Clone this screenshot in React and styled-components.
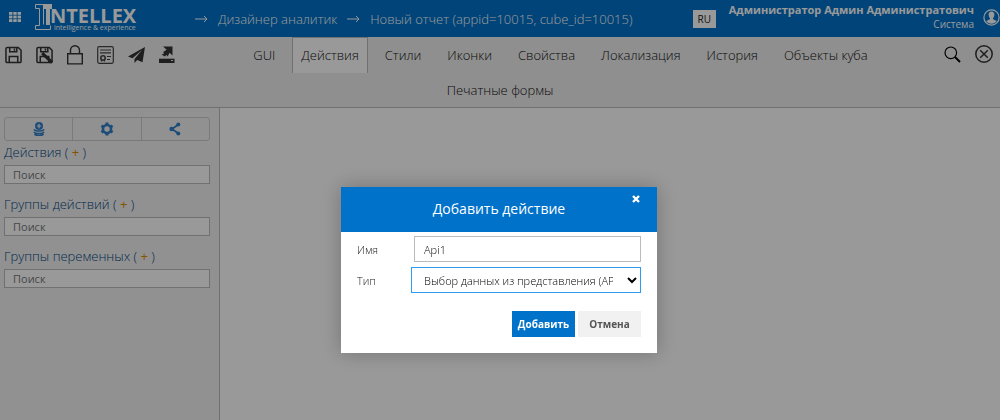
import React from 'react';
import styled, { createGlobalStyle } from 'styled-components';

const GlobalStyle = createGlobalStyle`
  * {
    box-sizing: border-box;
  }
  body {
    margin: 0;
    background-color: #fff;
    font-family: 'Open Sans', 'Noto Sans', sans-serif;
    font-size: 13px;
    font-weight: 300;
    color: #222;
  }
  button, input, select {
    font-family: inherit;
    font-weight: inherit;
    margin: 0;
  }
`;

const StyledPage = styled.div`
  min-height: 100vh;
  display: flex;
  flex-direction: column;
`;

const StyledHeader = styled.header`
  height: 37px;
  display: flex;
  align-items: center;
  background-color: #0072ca;
  color: #fff;
`;

const StyledIconButton = styled.button`
  display: flex;
  padding: 0;
  border: 0;
  background: none;
  color: ${(props) => props.$color || '#333'};
  cursor: pointer;
`;

const StyledAppsButton = styled(StyledIconButton)`
  padding: 0 14px 3px 9px;
`;

const StyledBreadcrumbs = styled.nav`
  display: flex;
  align-items: center;
  gap: 10px;
  flex: 1;
  padding-left: 56px;
  line-height: 18px;
  white-space: nowrap;
`;

const StyledCrumb = styled.a`
  color: #fff;
  text-decoration: none;
`;

const StyledLanguage = styled.button`
  width: 23px;
  height: 18px;
  padding: 0;
  border: 0;
  background-color: #fff;
  color: #222;
  font-size: 10px;
  font-weight: 400;
  line-height: 18px;
  cursor: pointer;
`;

const StyledUser = styled.div`
  padding: 0 9px 4px 13px;
  text-align: right;
  font-size: 10px;
  font-weight: 400;
  line-height: 14px;
`;

const StyledUserName = styled.div`
  font-size: 11px;
  font-weight: 700;
`;

const StyledToolbar = styled.div`
  background-color: #eee;
  border-bottom: 1px solid #bbb;
`;

const StyledToolbarRow = styled.div`
  display: flex;
  justify-content: ${(props) => (props.$center ? 'center' : 'space-between')};
  height: 35px;
`;

const StyledTools = styled.div`
  display: flex;
  align-items: center;
  gap: 14px;
  padding: 0 7px 0 5px;
`;

const StyledTabs = styled.nav`
  display: flex;
  gap: 8px;
`;

const StyledTab = styled.a`
  height: 36px;
  padding: 0 8px;
  border: 1px solid ${(props) => (props.$active ? '#bbb' : 'transparent')};
  border-bottom: 0;
  background-color: ${(props) => (props.$active ? '#fff' : 'transparent')};
  color: #111;
  line-height: 35px;
  text-decoration: none;
  white-space: nowrap;
`;

const StyledBody = styled.div`
  flex: 1;
  display: flex;
`;

const StyledSidebar = styled.aside`
  width: 220px;
  padding: 9px 9px 0 4px;
  background-color: #f2f2f2;
  border-right: 1px solid #bbb;
`;

const StyledButtonGroup = styled.div`
  display: flex;
  height: 24px;
  border: 1px solid #ccc;
  border-radius: 3px;
`;

const StyledGroupButton = styled.button`
  flex: 1;
  display: flex;
  align-items: center;
  justify-content: center;
  padding: 0;
  border: 0;
  border-left: ${(props) => (props.$first ? '0' : '1px solid #ccc')};
  background: none;
  color: #337fc9;
  cursor: pointer;
`;

const StyledSection = styled.section`
  height: 52px;
`;

const StyledSectionTitle = styled.div`
  height: 24px;
  line-height: 22px;
  color: #004480;
`;

const StyledAdd = styled.button`
  padding: 0;
  border: 0;
  background: none;
  color: #e08a00;
  font-size: 13px;
  font-weight: 400;
  cursor: pointer;
`;

const StyledSearch = styled.input`
  display: block;
  width: 100%;
  height: 19px;
  padding: 0 8px;
  border: 1px solid #bbb;
  border-radius: 0;
  background-color: #fff;
  font-size: 11px;
  font-weight: 400;
  &::placeholder {
    color: #777;
  }
`;

const StyledOverlay = styled.div`
  position: fixed;
  inset: 0;
  padding: 187px 2px 0 0;
  background-color: rgba(0, 0, 0, 0.4);
`;

const StyledModal = styled.form`
  width: 316px;
  margin: 0 auto;
  background-color: #fff;
  box-shadow: 0 0 20px rgba(0, 0, 0, 0.25);
`;

const StyledModalHeader = styled.div`
  position: relative;
  height: 45px;
  background-color: #0072ca;
  color: #fff;
  font-size: 14px;
  font-weight: 400;
  line-height: 44px;
  text-align: center;
`;

const StyledClose = styled(StyledIconButton)`
  position: absolute;
  top: 8px;
  right: 17px;
`;

const StyledModalBody = styled.div`
  padding: 4px 16px 16px;
`;

const StyledField = styled.div`
  display: flex;
  align-items: center;
  justify-content: space-between;
  margin-bottom: 5px;
  font-size: 11px;
`;

const StyledTextInput = styled.input`
  width: 227px;
  height: 26px;
  padding: 0 9px;
  border: 1px solid #bbb;
  border-radius: 0;
  color: #000;
  font-size: 11px;
  outline: none;
`;

const StyledSelect = styled.select`
  width: 230px;
  height: 26px;
  padding: 0 11px 0 8px;
  border: 1px solid #2f9bef;
  border-radius: 0;
  background-color: #fff;
  color: #000;
  font-size: 11px;
  outline: none;
`;

const StyledActions = styled.div`
  display: flex;
  justify-content: flex-end;
  gap: 3px;
  padding-top: 13px;
`;

const StyledButton = styled.button`
  width: 63px;
  height: 26px;
  padding: 0;
  border: 0;
  background-color: ${(props) => (props.$primary ? '#0072ca' : '#f1f1f1')};
  color: ${(props) => (props.$primary ? '#fff' : '#555')};
  font-size: 10px;
  font-weight: 700;
  cursor: pointer;
`;

const StyledLogo = styled.svg`
  overflow: visible;
`;

const Logo = () => (
  <StyledLogo width="104" height="30" viewBox="0 0 104 30" fill="#fff" role="img" aria-label="Intellex">
    <path d="M9 .5H.5v4h4v17h-4v4h15v-4M8.500 .5v20" fill="none" stroke="#fff" />
    <path d="M9 0h8v5h-2v16h-4V5H9z" />
    <text x="15" y="19" fontFamily="Open Sans" fontSize="20" fontWeight="700">
      NTELLEX
    </text>
    <text x="19" y="26" fontFamily="Open Sans" fontSize="7" fontWeight="400">
      intelligence &amp; experience
    </text>
  </StyledLogo>
);

const AppsIcon = () => (
  <svg width="12" height="10" viewBox="0 0 12 10" fill="#fff">
    {[0, 4.3, 8.6].map((x) =>
      [0, 3.6, 7.2].map((y) => <rect key={`${x}-${y}`} x={x} y={y} width="3.4" height="2.8" />)
    )}
  </svg>
);

const ArrowIcon = () => (
  <svg width="13" height="10" viewBox="0 0 13 10" fill="none" stroke="#fff">
    <path d="M0 5h12M9 2l3 3-3 3" />
  </svg>
);

const UserIcon = () => (
  <svg width="17" height="20" viewBox="0 0 17 20">
    <circle cx="8.5" cy="8.5" r="7.6" fill="none" stroke="#fff" strokeWidth="1.2" />
    <path
      d="M8.5 2.6c2 0 3 1.4 2.9 3.2-.1 1.6-.7 2.7-1.3 3.3v1.2l3.6 1.7c-1.2 1.7-3 2.8-5.2 2.8s-4-1.1-5.2-2.8l3.6-1.7V9.1C6.3 8.5 5.7 7.4 5.6 5.8 5.5 4 6.5 2.6 8.5 2.6z"
      fill="#fff"
    />
  </svg>
);

const SaveIcon = ({ edit }) => (
  <svg width="17" height="18" viewBox="0 0 18 18" fill="none" stroke="currentColor" strokeWidth="1.6">
    <path d="M2.5 1H14l3 3v11.5a1.5 1.5 0 0 1-1.5 1.5h-13A1.5 1.5 0 0 1 1 15.5v-13A1.5 1.5 0 0 1 2.5 1z" />
    <path d="M5 1v4.5h7.5V1M10 2v2.5M4.5 17v-6.5h9V17" />
    {edit && <path d="M6.5 7L17 17" strokeWidth="3.2" />}
  </svg>
);

const LockIcon = () => (
  <svg width="16" height="20" viewBox="0 0 16 20" fill="none" stroke="currentColor" strokeWidth="1.4">
    <path d="M.7 8.7h14.6v10.2H.7zM3.5 8.7V5.3a4.5 4.5 0 0 1 9 0v3.4" />
  </svg>
);

const CertificateIcon = () => (
  <svg width="17" height="18" viewBox="0 0 17 18" fill="none" stroke="#444" strokeWidth="1.2">
    <rect x=".7" y=".7" width="15.6" height="16.6" rx="1.5" />
    <path d="M3 4h11M3 6.8h11M10 10.5h4M10 13.5h3" />
    <circle cx="6" cy="12" r="2.2" strokeWidth="1.6" />
    <path d="M4.5 14v1.5M7.5 14v1.5" />
  </svg>
);

const PlaneIcon = () => (
  <svg width="17" height="16" viewBox="0 0 17 16" fill="currentColor">
    <path d="M17 0L0 9.5l4.5 1.7L14 3 6.5 12v4l2.7-3 5.3 2.2z" />
  </svg>
);

const UploadIcon = () => (
  <svg width="16" height="17" viewBox="0 0 16 17" fill="currentColor">
    <path d="M0 12.7h15.5V17H0z" />
    <path d="M4 .5h9.5v9l-2.8-2.7-2.2 3.7-1-1.7L6 10.500l-3.5-2L5 7.8 4.2 6l3.500-2.200z" />
    <path d="M12 14.5h2" stroke="#eee" />
  </svg>
);

const SearchIcon = () => (
  <svg width="17" height="18" viewBox="0 0 17 18" fill="none" stroke="currentColor">
    <circle cx="6.8" cy="6.8" r="5.8" strokeWidth="1.2" />
    <path d="M11 11l5 5" strokeWidth="2" />
  </svg>
);

const CircleCloseIcon = () => (
  <svg width="18" height="20" viewBox="0 0 18 20" fill="none" stroke="currentColor" strokeWidth="1.5">
    <circle cx="9" cy="9" r="8.2" />
    <path d="M5.2 5.2l7.6 7.6M12.8 5.2l-7.6 7.6" />
  </svg>
);

const DatabaseIcon = () => (
  <svg width="12" height="14" viewBox="0 0 12 14" fill="currentColor">
    <circle cx="6" cy="4" r="4" />
    <path d="M6 1.8v4.4M3.8 4h4.4" stroke="#f2f2f2" strokeWidth="1.2" />
    <path
      d="M1 7.2c1 2.5 9 2.5 10 0M1 9.7c1 2.5 9 2.5 10 0M1.5 12c1.2 2 7.8 2 9 0"
      fill="none"
      stroke="currentColor"
      strokeWidth="1.5"
    />
  </svg>
);

const GearIcon = () => (
  <svg width="14" height="14" viewBox="0 0 14 14" fill="none" stroke="currentColor">
    <circle cx="7" cy="7" r="4" strokeWidth="2.6" />
    <path
      d="M7 .5v2M7 11.5v2M1.4 3.7l1.7 1M10.9 9.3l1.7 1M1.4 10.3l1.7-1M10.9 4.7l1.7-1"
      strokeWidth="3"
    />
  </svg>
);

const ShareIcon = () => (
  <svg width="12" height="14" viewBox="0 0 12 14" fill="currentColor">
    <path d="M9.5 2.5L3 7l6.5 4.5" fill="none" stroke="currentColor" strokeWidth="1.8" />
    <circle cx="9.3" cy="2.6" r="2" />
    <circle cx="2.6" cy="7" r="2.2" />
    <circle cx="9.3" cy="11.4" r="2" />
  </svg>
);

const CrossIcon = () => (
  <svg width="8" height="8" viewBox="0 0 8 8" stroke="#fff" strokeWidth="2.4">
    <path d="M1 1l6 6M7 1L1 7" />
  </svg>
);

const tools = [
  { label: 'Сохранить', icon: <SaveIcon /> },
  { label: 'Сохранить как', icon: <SaveIcon edit /> },
  { label: 'Заблокировать', icon: <LockIcon /> },
  { label: 'Сертификат', icon: <CertificateIcon /> },
  { label: 'Отправить', icon: <PlaneIcon /> },
  { label: 'Выгрузить', icon: <UploadIcon /> },
];

const tabs = ['GUI', 'Действия', 'Стили', 'Иконки', 'Свойства', 'Локализация', 'История', 'Объекты куба'];

const sections = ['Действия', 'Группы действий', 'Группы переменных'];

const Header = () => (
  <StyledHeader>
    <StyledAppsButton aria-label="Приложения">
      <AppsIcon />
    </StyledAppsButton>
    <Logo />
    <StyledBreadcrumbs>
      <ArrowIcon />
      <StyledCrumb href="#designer">Дизайнер аналитик</StyledCrumb>
      <ArrowIcon />
      <StyledCrumb href="#report">Новый отчет (appid=10015, cube_id=10015)</StyledCrumb>
    </StyledBreadcrumbs>
    <StyledLanguage>RU</StyledLanguage>
    <StyledUser>
      <StyledUserName>Администратор Админ Администратович</StyledUserName>
      Система
    </StyledUser>
    <StyledIconButton aria-label="Профиль">
      <UserIcon />
    </StyledIconButton>
  </StyledHeader>
);

const Toolbar = () => (
  <StyledToolbar>
    <StyledToolbarRow>
      <StyledTools>
        {tools.map((tool) => (
          <StyledIconButton key={tool.label} aria-label={tool.label}>
            {tool.icon}
          </StyledIconButton>
        ))}
      </StyledTools>
      <StyledTabs>
        {tabs.map((tab) => (
          <StyledTab key={tab} href="#tab" $active={tab === 'Действия'}>
            {tab}
          </StyledTab>
        ))}
      </StyledTabs>
      <StyledTools>
        <StyledIconButton $color="#000" aria-label="Найти">
          <SearchIcon />
        </StyledIconButton>
        <StyledIconButton aria-label="Закрыть отчет">
          <CircleCloseIcon />
        </StyledIconButton>
      </StyledTools>
    </StyledToolbarRow>
    <StyledToolbarRow $center>
      <StyledTab href="#tab">Печатные формы</StyledTab>
    </StyledToolbarRow>
  </StyledToolbar>
);

const SidebarSection = ({ title }) => (
  <StyledSection>
    <StyledSectionTitle>
      {title} ( <StyledAdd aria-label={`Добавить: ${title}`}>+</StyledAdd> )
    </StyledSectionTitle>
    <StyledSearch type="text" placeholder="Поиск" aria-label={title} />
  </StyledSection>
);

const Sidebar = () => (
  <StyledSidebar>
    <StyledButtonGroup>
      <StyledGroupButton $first aria-label="Данные">
        <DatabaseIcon />
      </StyledGroupButton>
      <StyledGroupButton aria-label="Настройки">
        <GearIcon />
      </StyledGroupButton>
      <StyledGroupButton aria-label="Связи">
        <ShareIcon />
      </StyledGroupButton>
    </StyledButtonGroup>
    {sections.map((title) => (
      <SidebarSection key={title} title={title} />
    ))}
  </StyledSidebar>
);

const AddActionModal = () => (
  <StyledOverlay>
    <StyledModal role="dialog" aria-label="Добавить действие">
      <StyledModalHeader>
        Добавить действие
        <StyledClose type="button" aria-label="Закрыть">
          <CrossIcon />
        </StyledClose>
      </StyledModalHeader>
      <StyledModalBody>
        <StyledField>
          <label htmlFor="action-name">Имя</label>
          <StyledTextInput id="action-name" type="text" defaultValue="Api1" />
        </StyledField>
        <StyledField>
          <label htmlFor="action-type">Тип</label>
          <StyledSelect id="action-type">
            <option>Выбор данных из представления (API)</option>
          </StyledSelect>
        </StyledField>
        <StyledActions>
          <StyledButton type="button" $primary>
            Добавить
          </StyledButton>
          <StyledButton type="button">Отмена</StyledButton>
        </StyledActions>
      </StyledModalBody>
    </StyledModal>
  </StyledOverlay>
);

const App = () => (
  <StyledPage>
    <GlobalStyle />
    <Header />
    <Toolbar />
    <StyledBody>
      <Sidebar />
    </StyledBody>
    <AddActionModal />
  </StyledPage>
);

export default App;
